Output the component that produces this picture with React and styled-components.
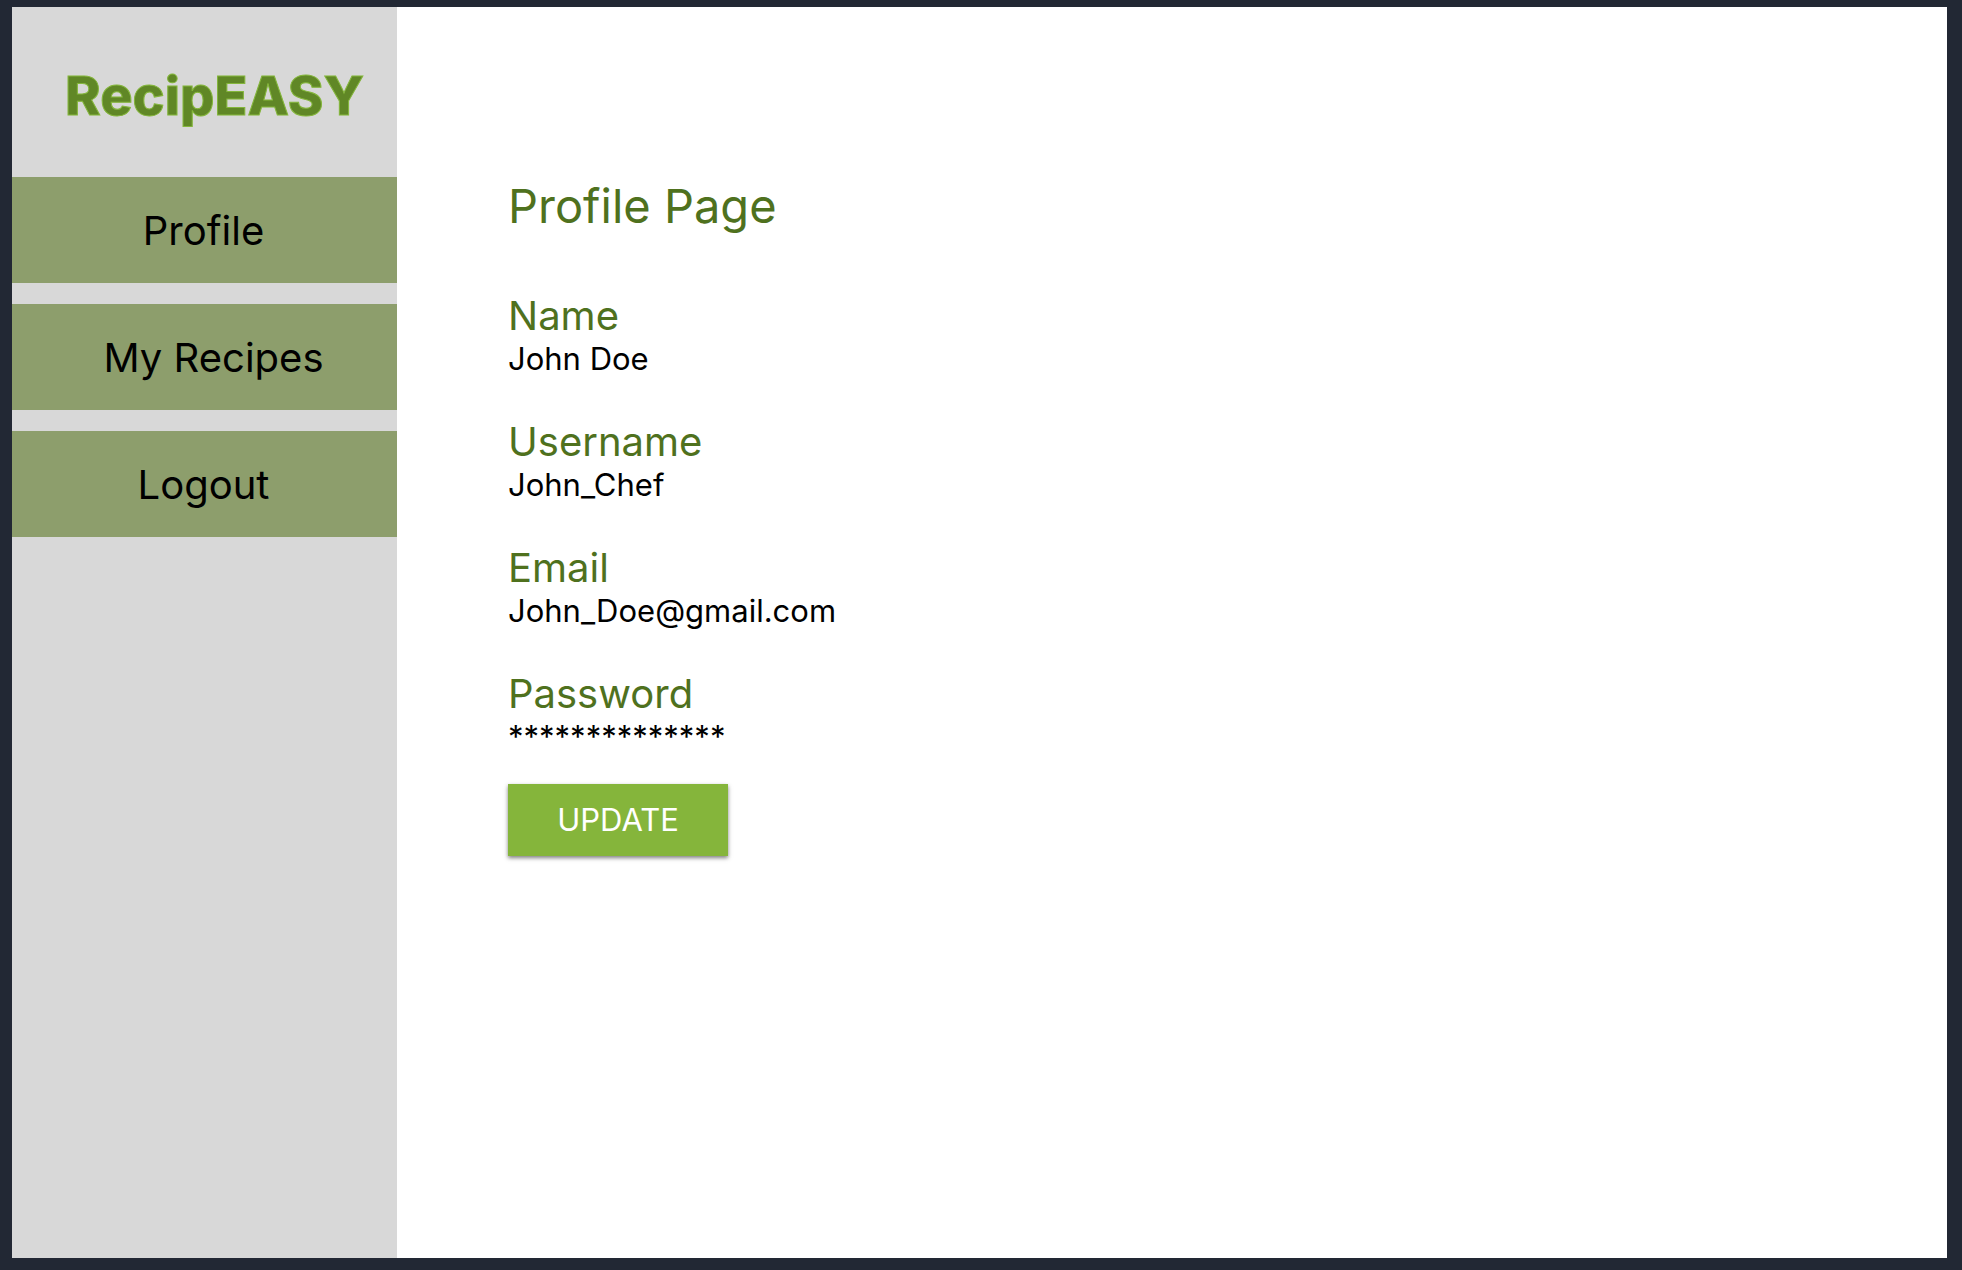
import React from "react";
import styled, { createGlobalStyle } from "styled-components";

const GlobalStyle = createGlobalStyle`
  *, *::before, *::after {
    box-sizing: border-box;
  }
  body {
    margin: 0;
    background: #222834;
    color: #000;
    font-family: Inter, "Liberation Sans", sans-serif;
    font-weight: 400;
  }
`;

const Page = styled.div`
  min-height: 100vh;
  padding: 7px 15px 12px 12px;
  display: flex;
`;

const Frame = styled.div`
  flex: 1;
  display: flex;
  background: #fff;
`;

const Sidebar = styled.aside`
  flex: 0 0 385px;
  background: #d8d8d8;
`;

const Logo = styled.a`
  display: block;
  padding: 56px 0 48px 53px;
  color: #608726;
  font-size: 54px;
  font-weight: 800;
  line-height: 66px;
  text-decoration: none;
  white-space: nowrap;
  -webkit-text-stroke: 1px #84b63b;
`;

const Nav = styled.nav`
  display: flex;
  flex-direction: column;
  gap: 21px;
`;

const NavLink = styled.a`
  display: flex;
  align-items: center;
  justify-content: center;
  height: 106px;
  padding: 2px 2px 0 ${({ $indented }) => ($indented ? "20px" : "0")};
  background: #8d9e6c;
  color: #000;
  font-size: 40px;
  line-height: 48px;
  text-decoration: none;
`;

const Content = styled.main`
  flex: 1;
  display: flex;
  flex-direction: column;
  align-items: flex-start;
  padding: 170px 40px 40px 111px;
`;

const Title = styled.h1`
  margin: 0 0 57px;
  color: #4f711e;
  font-size: 47px;
  font-weight: inherit;
  line-height: 58px;
`;

const Fields = styled.dl`
  display: flex;
  flex-direction: column;
  gap: 40px;
  margin: 0 0 28px;
`;

const Label = styled.dt`
  color: #4f711e;
  font-size: 40px;
  line-height: 48px;
`;

const Value = styled.dd`
  margin: 0;
  font-size: 31px;
  line-height: 38px;
`;

const Button = styled.button`
  width: 220px;
  height: 72px;
  padding: 0;
  border: 0;
  background: #85b53b;
  box-shadow: 0 2px 4px rgba(0, 0, 0, 0.5);
  color: #fff;
  font-family: inherit;
  font-size: 31px;
  line-height: 38px;
  cursor: pointer;
`;

const links = [
  { label: "Profile", href: "#profile" },
  { label: "My Recipes", href: "#recipes", indented: true },
  { label: "Logout", href: "#logout" },
];

const fields = [
  { label: "Name", value: "John Doe" },
  { label: "Username", value: "John_Chef" },
  { label: "Email", value: "John_Doe@gmail.com" },
  { label: "Password", value: "**************" },
];

export default function App() {
  return (
    <>
      <GlobalStyle />
      <Page>
        <Frame>
          <Sidebar>
            <Logo href="#home">RecipEASY</Logo>
            <Nav>
              {links.map(({ label, href, indented }) => (
                <NavLink key={href} href={href} $indented={indented}>
                  {label}
                </NavLink>
              ))}
            </Nav>
          </Sidebar>
          <Content>
            <Title>Profile Page</Title>
            <Fields>
              {fields.map(({ label, value }) => (
                <div key={label}>
                  <Label>{label}</Label>
                  <Value>{value}</Value>
                </div>
              ))}
            </Fields>
            <Button type="button">UPDATE</Button>
          </Content>
        </Frame>
      </Page>
    </>
  );
}
